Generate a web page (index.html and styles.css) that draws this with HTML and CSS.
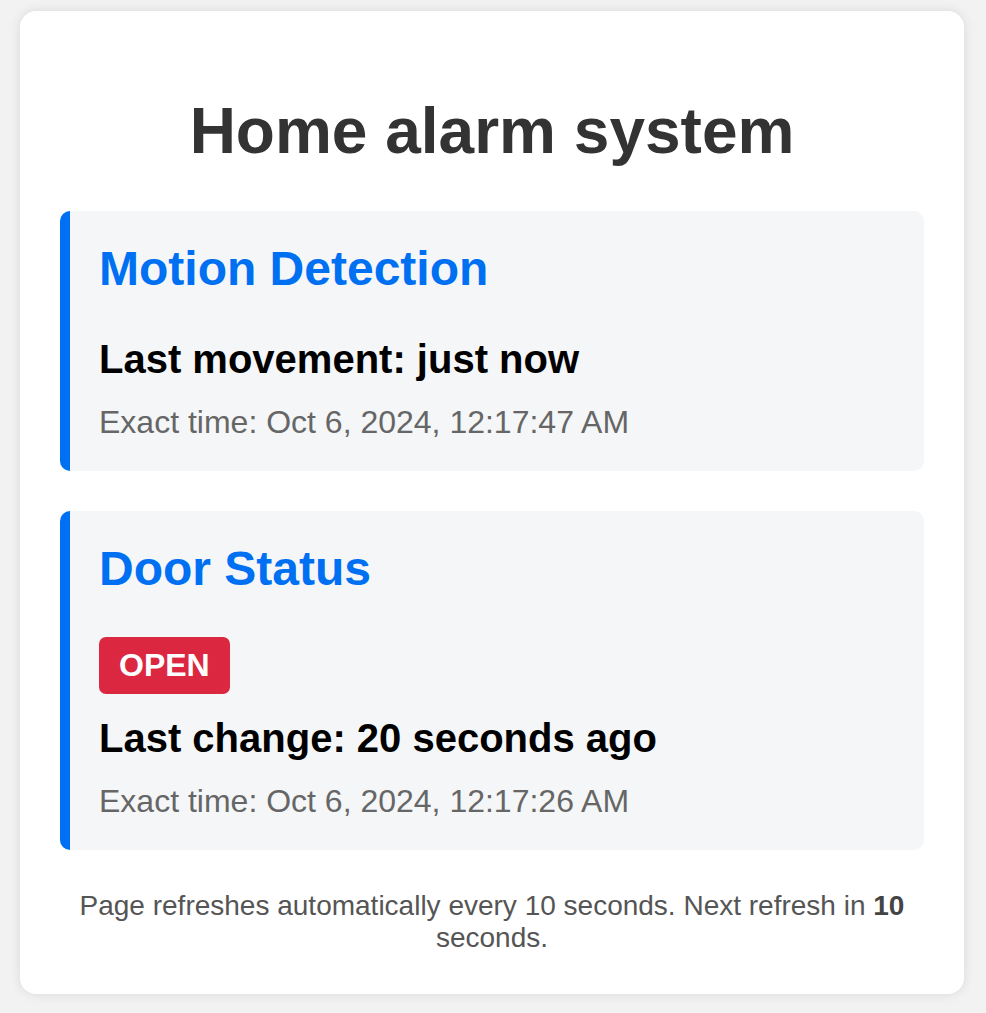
FILE: index.html
```html
<!DOCTYPE html>
<html lang="en">
<head>
<meta charset="utf-8">
<title>Home alarm system</title>
<link rel="stylesheet" href="styles.css">
</head>
<body>
<div class="card">
  <h1 class="title">Home alarm system</h1>
  <section class="panel">
    <h2 class="panel-title">Motion Detection</h2>
    <p class="last">Last movement: just now</p>
    <p class="exact">Exact time: Oct 6, 2024, 12:17:47 AM</p>
  </section>
  <section class="panel">
    <h2 class="panel-title">Door Status</h2>
    <div class="status-row"><span class="badge badge-open">OPEN</span></div>
    <p class="last">Last change: 20 seconds ago</p>
    <p class="exact">Exact time: Oct 6, 2024, 12:17:26 AM</p>
  </section>
  <p class="footer">Page refreshes automatically every 10 seconds. Next refresh in <strong>10</strong> seconds.</p>
</div>
</body>
</html>
```
FILE: styles.css
```css
html, body {
  margin: 0;
  padding: 0;
}
body {
  background: #f2f2f2;
  font-family: "Liberation Sans", Arial, Helvetica, sans-serif;
  font-size: 32px;
  color: #000;
  padding: 11px 22px 18px 20px;
}
.card {
  background: #fff;
  border-radius: 16px;
  box-shadow: 0 0 12px rgba(0, 0, 0, 0.1);
  padding: 40px;
}
.title {
  margin: 43px 0 43px;
  font-size: 64px;
  font-weight: bold;
  color: #333;
  text-align: center;
  line-height: normal;
}
.panel {
  background: #f5f6f8;
  border-left: 10px solid #0070f3;
  border-radius: 10px;
  padding: 30px 30px 30px 29px;
  margin-bottom: 40px;
}
.panel-title {
  margin: 0 0 41px;
  font-size: 48px;
  font-weight: bold;
  color: #0070f3;
  line-height: normal;
}
.last {
  margin: 20px 0 22px;
  font-size: 40px;
  font-weight: bold;
  color: #000;
}
.exact {
  margin: 0;
  font-size: 32px;
  color: #666;
}
.status-row {
  margin-bottom: 22px;
  line-height: 0;
}
.status-row + .last {
  margin-top: 0;
}
.badge {
  display: inline-block;
  padding: 10px 20px;
  border-radius: 7px;
  font-size: 32px;
  line-height: 37px;
  font-weight: bold;
  color: #fff;
}
.badge-open {
  background: #dc2741;
}
.footer {
  margin: 0;
  font-size: 28px;
  color: #555;
  text-align: center;
}
.footer strong {
  color: #444;
}
```
